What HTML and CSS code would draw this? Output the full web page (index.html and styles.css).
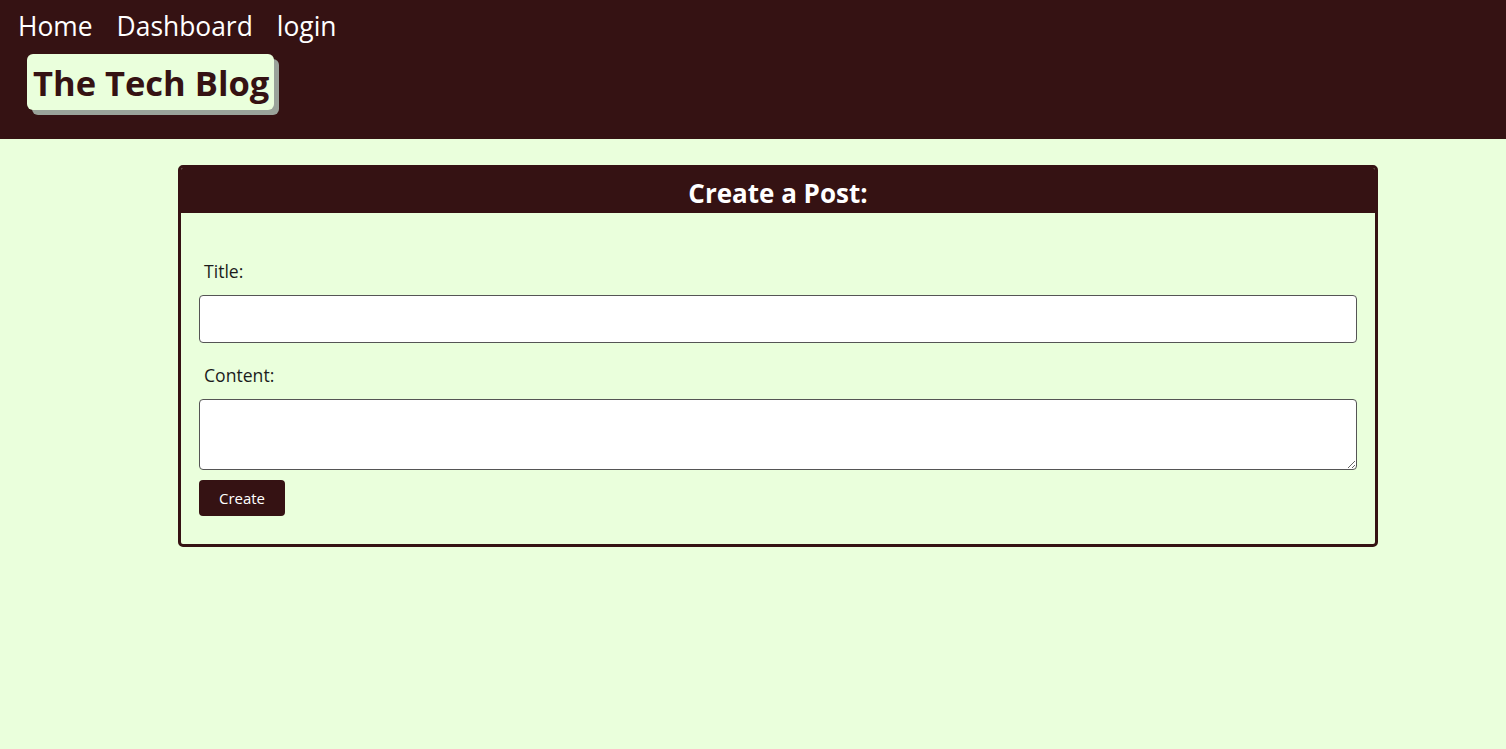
FILE: index.html
```html
<!DOCTYPE html>
<html lang="en">
<head>
<meta charset="utf-8">
<title>The Tech Blog</title>
<link rel="stylesheet" href="styles.css">
</head>
<body>
<header class="site-header">
  <nav class="nav">
    <a class="nav-link" href="#">Home</a>
    <a class="nav-link" href="#">Dashboard</a>
    <a class="nav-link" href="#">login</a>
  </nav>
  <h1 class="brand">The Tech Blog</h1>
</header>
<main class="main">
  <section class="card">
    <h2 class="card-title">Create a Post:</h2>
    <form class="card-body">
      <label class="label" for="title">Title:</label>
      <input class="field" id="title" type="text">
      <label class="label" for="content">Content:</label>
      <textarea class="field area" id="content"></textarea>
      <button class="btn" type="button">Create</button>
    </form>
  </section>
</main>
</body>
</html>
```
FILE: styles.css
```css
* { box-sizing: border-box; }
html, body {
  margin: 0;
  background: #eaffdc;
  font-family: "Open Sans", "Noto Sans", sans-serif;
  height: 100%;
}
.site-header {
  background: #351213;
  height: 139px;
  padding: 6px 18px 0;
}
.nav {
  display: flex;
  gap: 24px;
}
.nav-link {
  color: #fff;
  text-decoration: none;
  font-size: 26.4px;
  line-height: 40px;
}
.brand {
  display: inline-block;
  margin: 8px 0 0 9px;
  padding: 6px 5px 4px 6px;
  background: #eaffdc;
  color: #351213;
  font-size: 34.5px;
  line-height: 46px;
  font-weight: 700;
  border-radius: 6px;
  box-shadow: 5px 5px 0 #9aa39a;
}
.main {
  padding-top: 26px;
  padding-left: 50px;
  display: flex;
  justify-content: center;
}
.card {
  width: 1200px;
  border: 3px solid #351213;
  border-radius: 5px;
  overflow: hidden;
}
.card-title {
  margin: 0;
  background: #351213;
  color: #fff;
  text-align: center;
  font-size: 26px;
  font-weight: 700;
  height: 45px;
  line-height: 50px;
}
.card-body {
  display: flex;
  flex-direction: column;
  align-items: flex-start;
  padding: 47px 18px 28px;
}
.label {
  font-size: 17.6px;
  color: #1c1c1c;
  margin-left: 5px;
  line-height: 22px;
}
.field {
  width: 100%;
  height: 48px;
  margin: 13px 0 21px;
  border: 1px solid #555;
  border-radius: 4px;
  background: #fff;
  font: inherit;
}
.area {
  height: 71px;
  margin-bottom: 10px;
  resize: vertical;
}
.btn {
  width: 86px;
  height: 36px;
  background: #351213;
  color: #fff;
  border: none;
  border-radius: 4px;
  font-family: inherit;
  font-size: 15px;
}
```
